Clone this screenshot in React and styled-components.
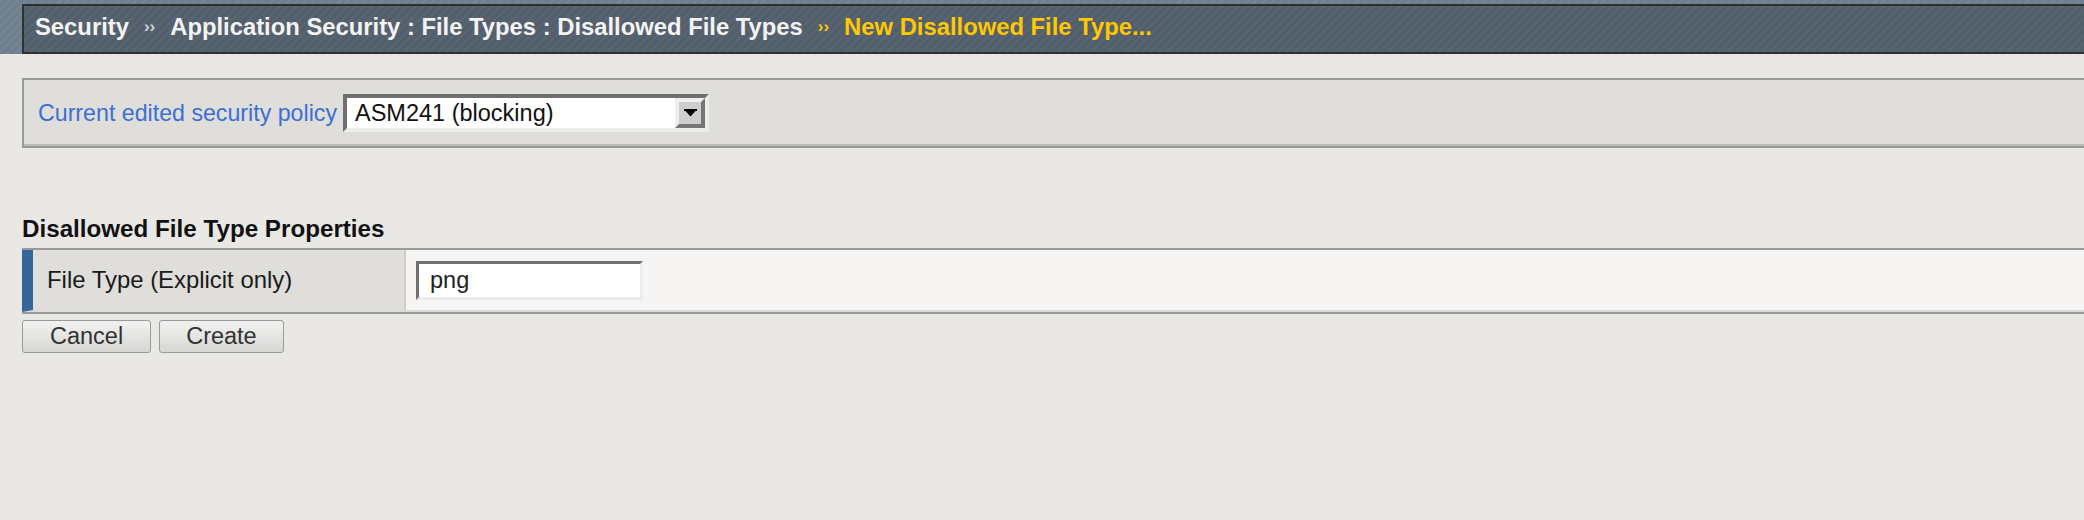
import React from 'react';
import styled, { createGlobalStyle } from 'styled-components';

const GlobalStyle = createGlobalStyle`
  html, body {
    margin: 0;
    padding: 0;
    background: #e9e8e4;
  }
  body {
    font-family: "Liberation Sans", Arial, sans-serif;
    font-size: 23.5px;
    color: #222;
  }
`;

const Page = styled.div`
  min-height: 520px;
`;

const Header = styled.header`
  padding: 4px 0 0 22px;
  background:
    repeating-linear-gradient(135deg, rgba(255, 255, 255, 0.05) 0 2px, transparent 2px 6px),
    #6f7f8f;
`;

const Crumbs = styled.nav`
  display: flex;
  align-items: center;
  height: 42px;
  padding: 0 0 4px 11px;
  border: 2px solid #2f3033;
  border-right: none;
  background:
    repeating-linear-gradient(135deg, rgba(255, 255, 255, 0.035) 0 2px, transparent 2px 6px),
    #535f6c;
  font-size: 23.8px;
  font-weight: bold;
  color: #f3f3f3;
  white-space: nowrap;
`;

const Crumb = styled.span`
  color: ${(p) => (p.$current ? '#ffc800' : '#f3f3f3')};
`;

const Sep = styled.span`
  margin: 0 15px;
  font-size: 17px;
  color: ${(p) => (p.$current ? '#ffc800' : '#cfd2d6')};
`;

const Main = styled.main`
  padding: 24px 0 0 22px;
`;

const PolicyBar = styled.div`
  display: flex;
  align-items: center;
  height: 66px;
  padding-left: 14px;
  background: #dfdedb;
  border-top: 2px solid #999;
  border-left: 2px solid #999;
  border-bottom: 2px solid #999;
  box-shadow: inset 0 -2px 0 #bdbcb8;
`;

const PolicyLabel = styled.span`
  font-size: 23.2px;
  color: #3d6fd2;
  margin-right: 6px;
`;

const Select = styled.div`
  box-sizing: border-box;
  display: flex;
  align-items: center;
  width: 366px;
  height: 38px;
  background: #fff;
  border-style: solid;
  border-width: 4px;
  border-color: #707070 #ececec #ececec #707070;
  color: #111;
`;

const SelectValue = styled.span`
  flex: 1;
  padding-left: 8px;
`;

const SelectButton = styled.span`
  box-sizing: border-box;
  display: flex;
  align-items: center;
  justify-content: center;
  width: 30px;
  height: 30px;
  background: #cdcdcd;
  border-style: solid;
  border-width: 4px;
  border-color: #eeeeee #767676 #767676 #eeeeee;
`;

const Heading = styled.h3`
  margin: 67px 0 5px;
  font-size: 24.2px;
  line-height: 28px;
  font-weight: bold;
  color: #111;
`;

const Row = styled.div`
  display: flex;
  border-top: 2px solid #999;
  border-bottom: 2px solid #9c9c9c;
`;

const LabelCell = styled.div`
  box-sizing: border-box;
  display: flex;
  align-items: center;
  width: 384px;
  height: 62px;
  padding-left: 14px;
  background: #dfdedb;
  border-left: 11px solid #336699;
  border-right: 2px solid #cfcecb;
  border-bottom: 2px solid #dcdcdc;
  font-size: 23.9px;
  color: #1a1a1a;
`;

const ValueCell = styled.div`
  box-sizing: border-box;
  flex: 1;
  display: flex;
  align-items: center;
  height: 62px;
  padding-left: 10px;
  background: #f6f5f3;
  border-bottom: 2px solid #dcdcdc;
`;

const TextInput = styled.input`
  box-sizing: border-box;
  width: 227px;
  height: 39px;
  padding: 0 0 0 11px;
  margin: 0;
  background: #fff;
  border-style: solid;
  border-width: 3px;
  border-color: #717171 #ececec #ececec #717171;
  font: inherit;
  color: #222;
  outline: none;
`;

const Actions = styled.div`
  display: flex;
  gap: 8px;
  margin-top: 6px;
`;

const Button = styled.button`
  box-sizing: border-box;
  height: 33px;
  padding: 0 ${(p) => p.$pad || 27}px;
  margin: 0;
  border: 1px solid #9a9a9a;
  border-radius: 3px;
  background: linear-gradient(#f2f2f1, #d6d6d4);
  font: inherit;
  color: #333;
  line-height: 1;
`;

function Arrow() {
  return (
    <svg width="13" height="8" viewBox="0 0 13 8">
      <rect x="0" y="0" width="13" height="2" fill="#000" />
      <polygon points="1.5,2 11.5,2 6.5,7.5" fill="#000" />
    </svg>
  );
}

export default function App() {
  return (
    <Page>
      <GlobalStyle />
      <Header>
        <Crumbs>
          <Crumb>Security</Crumb>
          <Sep>››</Sep>
          <Crumb>Application Security : File Types : Disallowed File Types</Crumb>
          <Sep $current>››</Sep>
          <Crumb $current>New Disallowed File Type...</Crumb>
        </Crumbs>
      </Header>

      <Main>
        <PolicyBar>
          <PolicyLabel>Current edited security policy</PolicyLabel>
          <Select>
            <SelectValue>ASM241 (blocking)</SelectValue>
            <SelectButton>
              <Arrow />
            </SelectButton>
          </Select>
        </PolicyBar>

        <Heading>Disallowed File Type Properties</Heading>
        <Row>
          <LabelCell>File Type (Explicit only)</LabelCell>
          <ValueCell>
            <TextInput defaultValue="png" />
          </ValueCell>
        </Row>

        <Actions>
          <Button>Cancel</Button>
          <Button $pad={26}>Create</Button>
        </Actions>
      </Main>
    </Page>
  );
}
